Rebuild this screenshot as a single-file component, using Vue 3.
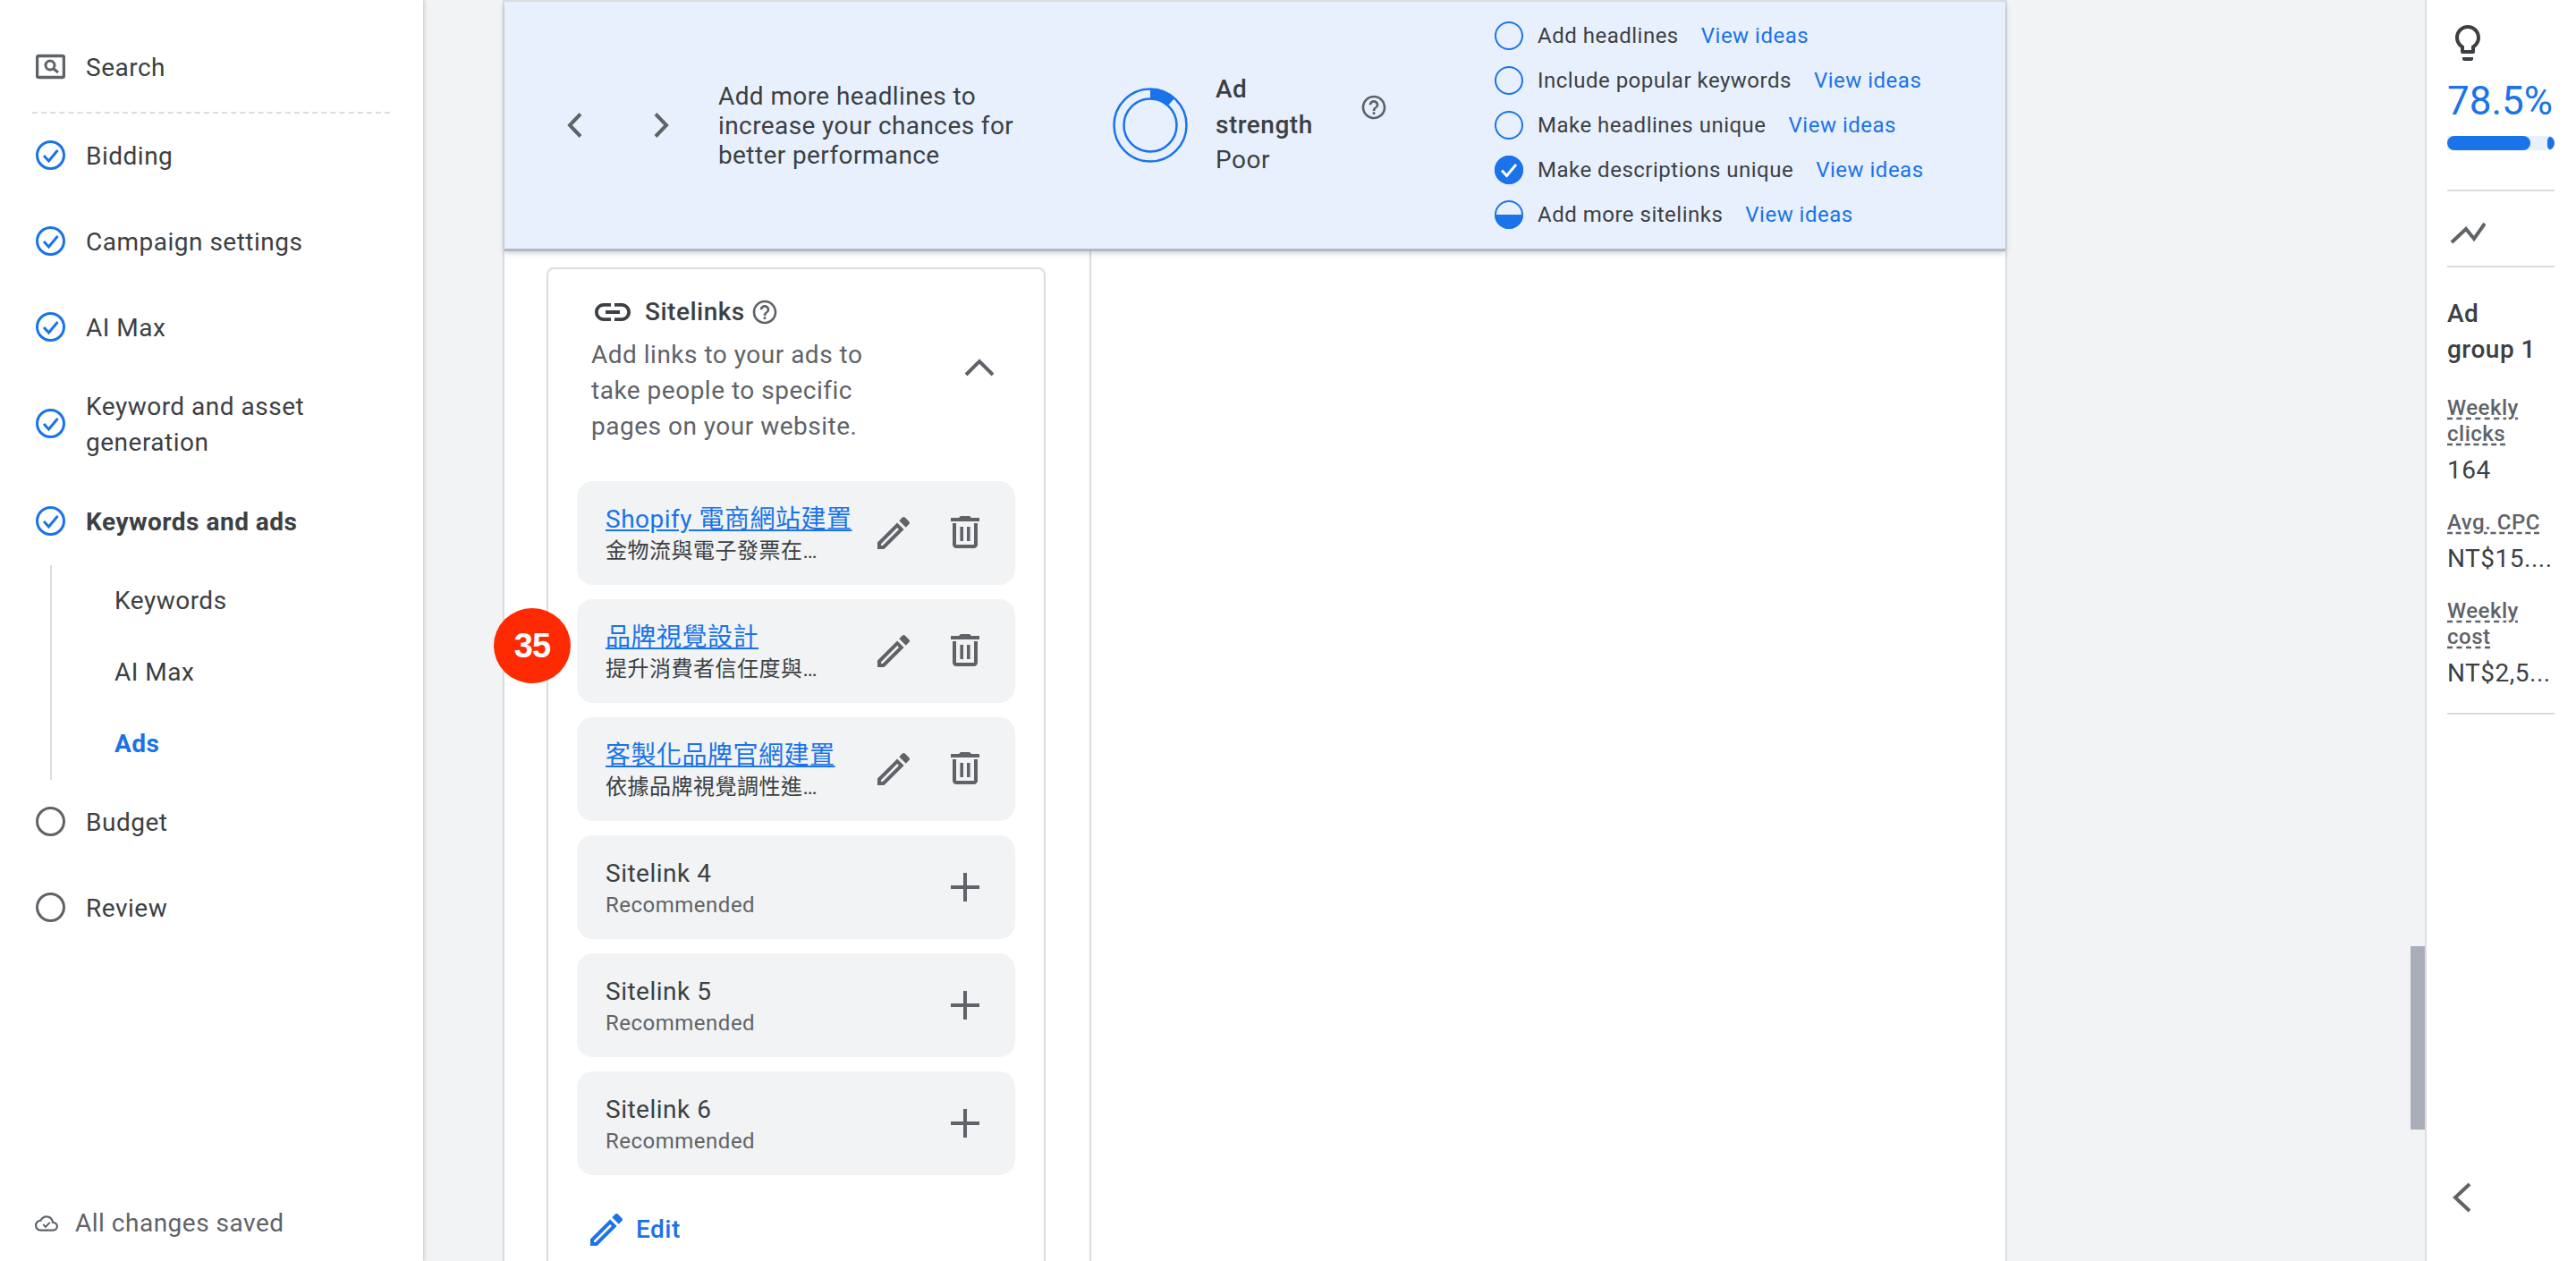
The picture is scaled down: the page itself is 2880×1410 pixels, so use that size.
<template>
  <div class="app">
    <aside class="sidebar">
      <div class="nav-item search">
        <svg class="nav-icon" width="33" height="33" viewBox="0 0 33 33" fill="none" stroke="#5f6368">
          <rect x="1.500" y="4.500" width="30" height="24" rx="2" stroke-width="3.500" />
          <circle cx="16" cy="15" r="5" stroke-width="3" />
          <path d="M20 19l5 4" stroke-width="3" />
        </svg>
        <span>Search</span>
      </div>
      <div class="nav-divider"></div>
      <div
        v-for="item in topSteps"
        :key="item.label"
        class="nav-item"
        :class="{ tall: item.tall, current: item.current }"
      >
        <svg class="nav-icon" width="33" height="33" viewBox="0 0 33 33" fill="none">
          <circle cx="16.500" cy="16.500" r="15" stroke="#1a73e8" stroke-width="3" />
          <path d="M9 17l5.500 6L24.500 11" stroke="#1a73e8" stroke-width="3" />
        </svg>
        <span>{{ item.label }}</span>
      </div>
      <div class="subnav">
        <div
          v-for="sub in subSteps"
          :key="sub"
          class="subnav-item"
          :class="{ active: sub === 'Ads' }"
        >
          {{ sub }}
        </div>
      </div>
      <div v-for="item in laterSteps" :key="item" class="nav-item later">
        <svg class="nav-icon" width="33" height="33" viewBox="0 0 33 33" fill="none">
          <circle cx="16.500" cy="16.500" r="15" stroke="#5f6368" stroke-width="3" />
        </svg>
        <span>{{ item }}</span>
      </div>
      <div class="saved">
        <svg width="26" height="26" viewBox="0 0 24 24" fill="#5f6368">
          <path d="M19.350 10.040C18.670 6.590 15.640 4 12 4 9.110 4 6.600 5.640 5.350 8.040 2.340 8.360 0 10.910 0 14c0 3.310 2.690 6 6 6h13c2.760 0 5-2.240 5-5 0-2.640-2.050-4.780-4.650-4.960zM19 18H6c-2.210 0-4-1.790-4-4s1.790-4 4-4h.71C7.370 7.690 9.480 6 12 6c3.040 0 5.500 2.460 5.500 5.500v.5H19c1.660 0 3 1.340 3 3s-1.340 3-3 3z" />
          <path d="M8.500 13l2.500 2.500 4.500-4.500" fill="none" stroke="#5f6368" stroke-width="1.800" />
        </svg>
        <span>All changes saved</span>
      </div>
    </aside>

    <main class="main">
      <div class="panel">
        <section class="banner">
          <div class="pager">
            <svg width="48" height="48" viewBox="0 0 48 48" fill="none" stroke="#5f6368" stroke-width="4">
              <path d="M30 11.500L18 24l12 12.500" />
            </svg>
            <svg width="48" height="48" viewBox="0 0 48 48" fill="none" stroke="#5f6368" stroke-width="4">
              <path d="M17 11.500L29 24 17 36.500" />
            </svg>
          </div>
          <p class="tip">Add more headlines to increase your chances for better performance</p>
          <svg class="ring" width="84" height="84" viewBox="0 0 84 84" fill="none" stroke="#1a73e8" stroke-width="2.500">
            <circle cx="42" cy="42" r="40.500" />
            <circle cx="42" cy="42" r="29.500" />
            <path d="M42 1.500A40.500 40.500 0 0 1 69.100 11.900L61.700 20.100A29.500 29.500 0 0 0 42 12.500Z" fill="#1a73e8" stroke="none" />
          </svg>
          <div class="strength">
            <strong>Ad strength</strong>
            <span>Poor</span>
          </div>
          <svg class="help strength-help" width="32" height="32" viewBox="0 0 24 24" fill="#5f6368">
            <path :d="helpPath" />
          </svg>
          <ul class="checklist">
            <li v-for="check in checks" :key="check.label">
              <svg width="32" height="32" viewBox="0 0 32 32" fill="none">
                <circle cx="16" cy="16" r="15" stroke="#1a73e8" stroke-width="2" />
                <template v-if="check.state === 'done'">
                  <circle cx="16" cy="16" r="16" fill="#1a73e8" />
                  <path d="M8 16.500l5.500 6L24 10" stroke="#fff" stroke-width="3" />
                </template>
                <path v-if="check.state === 'half'" d="M0 16A16 16 0 0 0 32 16Z" fill="#1a73e8" />
              </svg>
              <span>{{ check.label }}</span>
              <a>View ideas</a>
            </li>
          </ul>
        </section>

        <div class="panel-body">
          <div class="left-col">
            <section class="card">
              <div class="card-title">
                <svg width="48" height="48" viewBox="0 0 24 24" fill="#3c4043">
                  <path d="M3.900 12c0-1.710 1.390-3.100 3.100-3.100h4V7H7c-2.760 0-5 2.240-5 5s2.240 5 5 5h4v-1.900H7c-1.710 0-3.100-1.390-3.100-3.100zM8 13h8v-2H8v2zm9-6h-4v1.900h4c1.710 0 3.100 1.390 3.100 3.100s-1.390 3.100-3.100 3.100h-4V17h4c2.760 0 5-2.240 5-5s-2.240-5-5-5z" />
                </svg>
                <span>Sitelinks</span>
                <svg class="help" width="32" height="32" viewBox="0 0 24 24" fill="#5f6368">
                  <path :d="helpPath" />
                </svg>
              </div>
              <div class="card-desc">
                <p>Add links to your ads to take people to specific pages on your website.</p>
                <svg width="48" height="48" viewBox="0 0 48 48" fill="none" stroke="#5f6368" stroke-width="4">
                  <path d="M9 32l15-15 15 15" />
                </svg>
              </div>

              <div class="rows">
                <div v-for="(link, i) in sitelinks" :key="link.title" class="row">
                  <div v-if="i === 1" class="badge">35</div>
                  <div class="row-text">
                    <a class="row-title">{{ link.title }}</a>
                    <div class="row-sub">{{ link.desc }}</div>
                  </div>
                  <svg width="48" height="48" viewBox="0 0 24 24" fill="#5f6368">
                    <path :d="editPath" />
                  </svg>
                  <svg width="48" height="48" viewBox="0 0 24 24" fill="#5f6368">
                    <path d="M15.500 3.500l-1-1h-5l-1 1H4v2h16v-2zM5 6.500v12c0 1.100.9 2 2 2h10c1.100 0 2-.9 2-2v-12h-2v12H7v-12zM9.200 8.500h1.800v8H9.200zm3.800 0h1.800v8H13z" />
                  </svg>
                </div>
                <div v-for="n in [4, 5, 6]" :key="n" class="row">
                  <div class="row-text">
                    <div class="row-name">Sitelink {{ n }}</div>
                    <div class="row-rec">Recommended</div>
                  </div>
                  <svg width="48" height="48" viewBox="0 0 48 48" stroke="#5f6368" stroke-width="4">
                    <path d="M24 8v32M8 24h32" />
                  </svg>
                </div>
              </div>

              <a class="edit-link">
                <svg width="48" height="48" viewBox="0 0 24 24" fill="#1a73e8">
                  <path :d="editPath" />
                </svg>
                Edit
              </a>
            </section>
          </div>
        </div>
      </div>
      <div class="scroll-thumb"></div>
    </main>

    <aside class="rail">
      <svg class="bulb" width="48" height="48" viewBox="0 0 24 24" fill="#3c4043">
        <path d="M9 21c0 .55.45 1 1 1h4c.55 0 1-.45 1-1v-1H9v1zm3-19C8.140 2 5 5.140 5 9c0 2.380 1.190 4.470 3 5.740V17c0 .55.45 1 1 1h6c.55 0 1-.45 1-1v-2.260c1.810-1.270 3-3.360 3-5.740 0-3.860-3.140-7-7-7zm2.850 11.100l-.85.6V16h-4v-2.300l-.85-.6C7.800 12.160 7 10.630 7 9c0-2.760 2.240-5 5-5s5 2.240 5 5c0 1.630-.8 3.160-2.150 4.100z" />
      </svg>
      <div class="score">78.5%</div>
      <div class="score-bar">
        <div class="score-fill"></div>
        <div class="score-dot"></div>
      </div>
      <div class="rail-line first"></div>
      <div class="trend">
        <svg width="40" height="28" viewBox="0 0 40 28" fill="none" stroke="#5f6368" stroke-width="4">
          <path d="M2 25l16-15 9 11L39 4" />
        </svg>
      </div>
      <div class="rail-line"></div>
      <h3 class="group-name">Ad group 1</h3>
      <div v-for="stat in stats" :key="stat.label" class="stat">
        <div class="stat-label">{{ stat.label }}</div>
        <div class="stat-value">{{ stat.value }}</div>
      </div>
      <div class="rail-line last"></div>
      <svg class="collapse" width="48" height="48" viewBox="0 0 48 48" fill="none" stroke="#5f6368" stroke-width="4">
        <path d="M33 9L17 24l16 15" />
      </svg>
    </aside>
  </div>
</template>

<script setup>
const helpPath =
  'M11 18h2v-2h-2v2zm1-16C6.480 2 2 6.480 2 12s4.480 10 10 10 10-4.480 10-10S17.520 2 12 2zm0 18c-4.410 0-8-3.590-8-8s3.590-8 8-8 8 3.590 8 8-3.590 8-8 8zm0-14c-2.210 0-4 1.790-4 4h2c0-1.100.9-2 2-2s2 .9 2 2c0 2-3 1.750-3 5h2c0-2.250 3-2.500 3-5 0-2.210-1.790-4-4-4z'

const editPath =
  'M14.060 9.020l.92.92L5.920 19H5v-.92l9.060-9.060M17.660 3c-.25 0-.51.1-.7.29l-1.830 1.830 3.750 3.750 1.830-1.830c.39-.39.39-1.020 0-1.410l-2.340-2.340c-.2-.2-.45-.29-.71-.29zm-3.600 3.190L3 17.250V21h3.750L17.810 9.940l-3.750-3.750z'

const topSteps = [
  { label: 'Bidding' },
  { label: 'Campaign settings' },
  { label: 'AI Max' },
  { label: 'Keyword and asset generation', tall: true },
  { label: 'Keywords and ads', current: true },
]
const subSteps = ['Keywords', 'AI Max', 'Ads']
const laterSteps = ['Budget', 'Review']

const checks = [
  { label: 'Add headlines', state: 'empty' },
  { label: 'Include popular keywords', state: 'empty' },
  { label: 'Make headlines unique', state: 'empty' },
  { label: 'Make descriptions unique', state: 'done' },
  { label: 'Add more sitelinks', state: 'half' },
]

const sitelinks = [
  { title: 'Shopify 電商網站建置', desc: '金物流與電子發票在…' },
  { title: '品牌視覺設計', desc: '提升消費者信任度與…' },
  { title: '客製化品牌官網建置', desc: '依據品牌視覺調性進…' },
]

const stats = [
  { label: 'Weekly clicks', value: '164' },
  { label: 'Avg. CPC', value: 'NT$15....' },
  { label: 'Weekly cost', value: 'NT$2,5...' },
]
</script>

<style scoped>
.app {
  display: flex;
  height: 1410px;
  overflow: hidden;
  font-family: Roboto, "Noto Sans CJK TC", sans-serif;
  font-size: 28px;
  line-height: 40px;
  letter-spacing: 0.5px;
  color: #3c4043;
}

svg {
  flex: none;
  display: block;
}

/* left steps */
.sidebar {
  position: relative;
  z-index: 2;
  flex: none;
  display: flex;
  flex-direction: column;
  width: 473px;
  height: 1410px;
  padding-top: 29px;
  box-sizing: border-box;
  background: #fff;
  box-shadow: 1px 0 4px rgba(60, 64, 67, 0.25);
}

.nav-item {
  display: flex;
  align-items: center;
  gap: 23px;
  height: 96px;
  flex: none;
  padding-left: 40px;
  padding-right: 60px;
}

.nav-item.search {
  height: 94px;
}

.nav-item.tall {
  height: 119px;
}

.nav-item.current {
  height: 98px;
  padding-top: 2px;
  box-sizing: border-box;
  font-weight: 700;
}

.nav-icon {
  margin-top: -3px;
}

.nav-divider {
  flex: none;
  height: 0;
  margin: 2px 37px 0 36px;
  border-top: 2px dashed #dadce0;
}

.subnav {
  flex: none;
  border-left: 2px solid #dadce0;
  margin-left: 56px;
}

.subnav-item {
  display: flex;
  align-items: center;
  height: 80px;
  padding-left: 70px;
}

.subnav-item.active {
  color: #1a73e8;
  font-weight: 700;
}

.saved {
  display: flex;
  align-items: center;
  gap: 19px;
  margin-top: auto;
  padding: 0 0 22px 39px;
  color: #5f6368;
}

/* centre */
.main {
  position: relative;
  flex: 1;
  min-width: 0;
  background: #f1f3f4;
  padding-left: 89px;
}

.panel {
  display: flex;
  flex-direction: column;
  width: 1682px;
  height: 1410px;
  box-sizing: border-box;
  background: #fff;
  border-left: 2px solid #dadce0;
  border-right: 2px solid #dadce0;
}

.banner {
  position: relative;
  z-index: 1;
  flex: none;
  display: flex;
  align-items: center;
  height: 278px;
  box-sizing: border-box;
  padding-left: 55px;
  background: #e8f0fe;
  border-top: 2px solid #dadce0;
  box-shadow: 0 3px 0 #b3b8c2, 0 5px 6px rgba(60, 64, 67, 0.25);
}

.pager {
  display: flex;
  gap: 49px;
}

.tip {
  width: 340px;
  margin: 0 101px 0 39px;
  line-height: 33px;
  letter-spacing: 0.4px;
}

.strength {
  width: 120px;
  margin: -2px 0 0 31px;
}

.strength strong {
  display: block;
  font-weight: 500;
}

.strength span {
  display: block;
  margin-top: -1px;
}

.strength-help {
  margin: -40px 0 0 41px;
}

.checklist {
  margin: 0 0 0 119px;
  padding: 0;
  list-style: none;
  font-size: 24px;
}

.checklist li {
  display: flex;
  align-items: center;
  height: 50px;
}

.checklist span {
  margin: 0 25px 0 16px;
}

.checklist a {
  color: #1a73e8;
}

.panel-body {
  flex: 1;
  min-height: 0;
  display: flex;
}

.left-col {
  width: 656px;
  height: 100%;
  box-sizing: border-box;
  padding: 21px 0 0 47px;
  border-right: 2px solid #dadce0;
}

.card {
  width: 558px;
  height: 1300px;
  box-sizing: border-box;
  padding: 28px 32px 0;
  border: 2px solid #dadce0;
  border-radius: 8px;
}

.card-title {
  display: flex;
  align-items: center;
  gap: 12px;
  height: 48px;
  margin: -4px 0 0 16px;
  font-weight: 500;
}

.card-title .help {
  margin-left: -6px;
}

.card-desc {
  display: flex;
  justify-content: space-between;
  margin-top: 4px;
  padding: 0 16px 0 16px;
  color: #5f6368;
}

.card-desc p {
  width: 330px;
  margin: 0;
}

.card-desc svg {
  margin-top: 10px;
}

.rows {
  display: flex;
  flex-direction: column;
  gap: 16px;
  margin-top: 41px;
}

.row {
  position: relative;
  display: flex;
  align-items: center;
  gap: 32px;
  height: 116px;
  padding: 0 32px;
  border-radius: 18px;
  background: #f1f3f4;
}

.row-text {
  flex: 1;
  min-width: 0;
  padding-top: 2px;
}

.row-title,
.row-name {
  display: block;
  line-height: 38px;
  white-space: nowrap;
}

.row-title {
  color: #1a73e8;
  text-decoration: underline;
}

.row-sub,
.row-rec {
  font-size: 24px;
  line-height: 32px;
  white-space: nowrap;
}

.row-rec {
  color: #5f6368;
}

.badge {
  position: absolute;
  left: -93px;
  top: 10px;
  display: flex;
  align-items: center;
  justify-content: center;
  width: 86px;
  height: 84px;
  border-radius: 50%;
  background: #fe2a02;
  color: #fff;
  font-family: "Liberation Sans", sans-serif;
  font-size: 38px;
  font-weight: 700;
  letter-spacing: -1px;
}

.edit-link {
  display: flex;
  align-items: center;
  gap: 9px;
  margin: 37px 0 0 9px;
  color: #1a73e8;
  font-weight: 500;
}

.scroll-thumb {
  position: absolute;
  top: 1058px;
  right: 0;
  width: 16px;
  height: 205px;
  background: #a9aeb9;
}

/* right rail */
.rail {
  position: relative;
  flex: none;
  width: 169px;
  height: 1410px;
  box-sizing: border-box;
  padding: 24px 24px 0 23px;
  background: #fff;
  border-left: 2px solid #dadce0;
}

.bulb {
  margin-left: -1px;
}

.score {
  margin-top: 15px;
  font-size: 44px;
  line-height: 52px;
  letter-spacing: 0;
  color: #1a73e8;
}

.score-bar {
  position: relative;
  height: 16px;
  margin-top: 13px;
  overflow: hidden;
  background: #e8f0fe;
  border-radius: 0 8px 8px 0;
}

.score-fill {
  width: 93px;
  height: 100%;
  border-radius: 8px;
  background: #1a73e8;
}

.score-dot {
  position: absolute;
  right: 0;
  top: 0;
  width: 8px;
  height: 16px;
  border-radius: 8px 4px 4px 8px;
  background: #1a73e8;
}

.rail-line {
  height: 2px;
  background: #dadce0;
}

.rail-line.first {
  margin-top: 44px;
}

.rail-line.last {
  margin-top: 24px;
}

.trend {
  display: flex;
  align-items: center;
  height: 83px;
  padding-left: 3px;
}

.trend svg {
  margin-top: 8px;
}

.group-name {
  width: 104px;
  margin: 32px 0 0;
  font-size: 28px;
  line-height: 40px;
  font-weight: 500;
}

.stat {
  margin-top: 31px;
}

.stat + .stat {
  margin-top: 24px;
}

.stat-label {
  font-size: 24px;
  line-height: 29px;
  font-weight: 500;
  color: #5f6368;
  text-decoration: underline dashed;
  text-underline-offset: 3px;
}

.stat-value {
  line-height: 40px;
  margin-top: 6px;
  white-space: nowrap;
}

.collapse {
  position: absolute;
  left: 15px;
  top: 1315px;
}
</style>

<style>
body {
  background: #fff;
}
</style>
